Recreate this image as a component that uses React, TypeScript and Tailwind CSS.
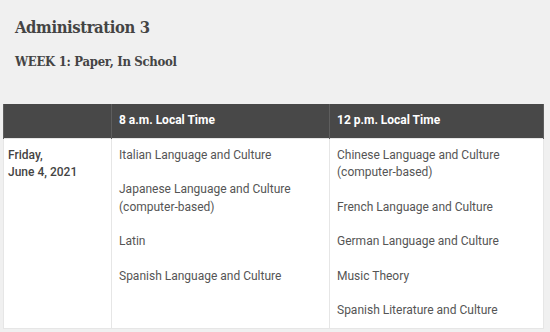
import React from 'react';

// schedule table for administration 3
const col8am = [
    ['Italian Language and Culture'],
    ['Japanese Language and Culture', '(computer-based)'],
    ['Latin'],
    ['Spanish Language and Culture'],
];

const col12pm = [
    ['Chinese Language and Culture', '(computer-based)'],
    ['French Language and Culture'],
    ['German Language and Culture'],
    ['Music Theory'],
    ['Spanish Literature and Culture'],
];

function Exams({ items }: { items: string[][] }) {
    return (
        <div className="flex flex-col gap-[17px]">
            {items.map((lines, i) => (
                <p key={i}>
                    {lines.map((l, j) => (
                        <span key={j} className="block">{l}</span>
                    ))}
                </p>
            ))}
        </div>
    );
}

export default function App() {
    const slab = "font-['DejaVu_Serif',serif] font-stretch-condensed text-[#444] font-bold";
    const thCSS = "text-left align-middle px-[7px] text-white font-bold text-[12px] border-x border-[#5e5e5e]";
    const tdCSS = "align-top pt-[8px] pb-[8px] border border-[#e6e6e6]";

    return (
        <div className="w-[550px] h-[332px] bg-[#f0f0f0] overflow-hidden font-['Roboto',sans-serif]">
            <div className="px-[15px] pt-[15px]">
                <h2 className={`${slab} text-[16.5px] leading-[26px] tracking-[-0.4px]`}>Administration 3</h2>
                <h3 className={`${slab} text-[13px] leading-[20px] mt-[11px] tracking-[-0.3px]`}>WEEK 1: Paper, In School</h3>
            </div>
            <table className="ml-[3px] mt-[32px] w-[541px] border-collapse table-fixed text-[12px] leading-[17.5px]">
                <colgroup>
                    <col className="w-[108px]" />
                    <col className="w-[218px]" />
                    <col />
                </colgroup>
                <thead>
                    <tr className="h-[34px] bg-[#484848]">
                        <th className={thCSS}></th>
                        <th className={thCSS}>8 a.m. Local Time</th>
                        <th className={thCSS}>12 p.m. Local Time</th>
                    </tr>
                </thead>
                <tbody className="bg-white text-[#555]">
                    <tr>
                        <td className={`${tdCSS} pl-[4px] pr-[4px] font-medium text-[#444]`}>
                            Friday,<br />June 4, 2021
                        </td>
                        <td className={`${tdCSS} px-[7px]`}><Exams items={col8am} /></td>
                        <td className={`${tdCSS} px-[7px]`}><Exams items={col12pm} /></td>
                    </tr>
                </tbody>
            </table>
        </div>
    );
}
